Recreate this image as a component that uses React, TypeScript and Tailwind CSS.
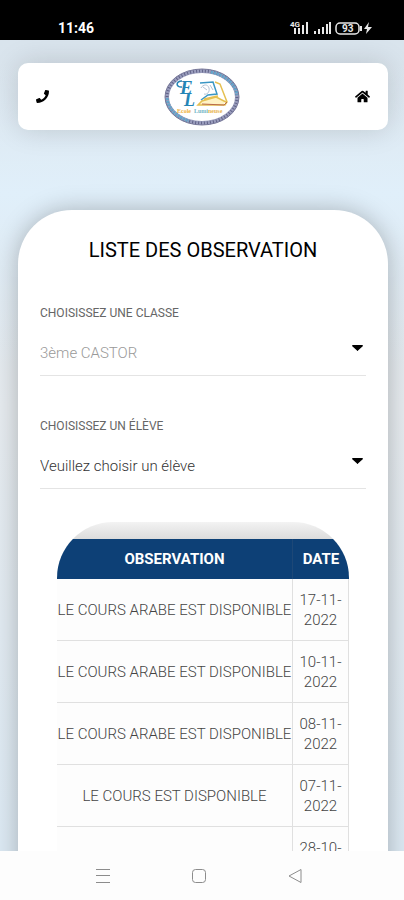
import { FaHome, FaPhone } from 'react-icons/fa'

interface Observation {
  label: string
  date: string
}

interface SelectFieldProps {
  id: string
  label: string
  options: string[]
  disabled?: boolean
}

const observations: Observation[] = [
  { label: 'LE COURS ARABE EST DISPONIBLE', date: '17-11-2022' },
  { label: 'LE COURS ARABE EST DISPONIBLE', date: '10-11-2022' },
  { label: 'LE COURS ARABE EST DISPONIBLE', date: '08-11-2022' },
  { label: 'LE COURS EST DISPONIBLE', date: '07-11-2022' },
  { label: '', date: '28-10-2022' },
]

function StatusBar() {
  return (
    <div className="flex h-10 shrink-0 items-center justify-between bg-black pl-[58px] pr-8 pt-4 text-white">
      <span className="text-sm font-bold leading-4">11:46</span>
      <svg width="84" height="16" viewBox="0 0 84 16" fill="#e8e8e8" aria-hidden="true">
        <text x="2" y="7" fontSize="8" fontWeight="700" fontFamily="Roboto, sans-serif">4G</text>
        <path d="M6 8h2v6H6zM10 8h2v6h-2zM14 5h2v9h-2zM18 2h2v12h-2z" />
        <path d="M26 11h2v3h-2zM30 9h2v5h-2zM34 7h2v7h-2zM38 4h2v10h-2zM41 2h2v12h-2z" />
        <rect x="48" y="3" width="23" height="11" rx="4" fill="none" stroke="#e8e8e8" strokeWidth="1.5" />
        <path d="M72 6h2v5h-2z" />
        <text x="54" y="12" fontSize="10" fontWeight="700" fontFamily="Roboto, sans-serif">93</text>
        <path d="M81 2l-5 7h3l-1 5 6-7h-4z" />
      </svg>
    </div>
  )
}

function Logo() {
  return (
    <svg width="76" height="58" viewBox="0 0 76 58" role="img" aria-label="Ecole Lumineuse">
      <ellipse cx="38" cy="29" rx="35" ry="26" fill="#fff" stroke="#9a9dbd" strokeWidth="4" />
      <ellipse cx="38" cy="29" rx="35" ry="26" fill="none" stroke="#626488" strokeWidth="3" strokeDasharray="1 2" />
      <path d="M47 4C62 7 72 17 73 27M3 30C4 41 14 50 25 53" fill="none" stroke="#62a7cc" strokeWidth="3" strokeDasharray="2 1" />
      <ellipse cx="38" cy="29" rx="37" ry="28" fill="none" stroke="#777899" />
      <g fill="#2585b6" fontFamily="Liberation Serif, serif" fontStyle="italic" fontWeight="700">
        <text x="16" y="26" fontSize="19">E</text>
        <text x="20" y="38" fontSize="18">L</text>
      </g>
      <path d="M18 19c-6 1-7-6 0-6" fill="none" stroke="#2585b6" strokeWidth="1.5" />
      <path d="M36 33l16-6 9 7-2 3H36z" fill="#fff3c4" />
      <path d="M36 15l13-1 4 12-9 1-7 5" fill="#fff" stroke="#3a96c4" strokeWidth="1.5" />
      <path d="M51 14l5 2 7 18-2 3H34l4-4 14-4 10 5M40 31l14-3" fill="none" stroke="#e5c052" strokeWidth="1.5" />
      <path d="M38 36l22 1 3-3" fill="none" stroke="#b96b4c" />
      <path d="M37 20c2-4 7-4 8 0s-2 7-5 6M39 19l4 3M46 17l3 5" fill="none" stroke="#b5c3d5" />
      <text x="13" y="45" fontSize="6" fontWeight="700" fontFamily="Liberation Serif, serif">
        <tspan fill="#efb13c">Ecole</tspan>
        <tspan fill="#75b7c7" dx="3">Lumi</tspan>
        <tspan fill="#e8b452">neuse</tspan>
      </text>
    </svg>
  )
}

function Header() {
  return (
    <header className="ml-[18px] mr-4 mt-[23px] flex h-[67px] items-center justify-between rounded-[10px] bg-white px-[18px] shadow-[0_0_28px_rgba(0,0,0,0.15)]">
      <a href="#contact" aria-label="Téléphone">
        <FaPhone className="size-[13px]" />
      </a>
      <Logo />
      <a href="#accueil" aria-label="Accueil">
        <FaHome className="size-[15px]" />
      </a>
    </header>
  )
}

function SelectField({ id, label, options, disabled }: SelectFieldProps) {
  return (
    <div className="mb-[42px] text-[#666]">
      <label htmlFor={id} className="block text-xs leading-4">{label}</label>
      <div className="relative mt-2">
        <select
          id={id}
          disabled={disabled}
          className="block h-[47px] w-full appearance-none border-b border-[#e4e4e4] bg-transparent p-0 pt-[3px] text-[15px] font-light text-[#333] opacity-100 outline-none disabled:text-[#999]"
        >
          {options.map((option) => (
            <option key={option}>{option}</option>
          ))}
        </select>
        <svg className="pointer-events-none absolute right-[3px] top-4" width="11" height="6" viewBox="0 0 11 6" aria-hidden="true">
          <path d="M0 1q0-1 1-1h9q1 0 1 1L6 5.5q-.5 1-1 0z" />
        </svg>
      </div>
    </div>
  )
}

function ObservationTable() {
  return (
    <div className="mx-[17px] overflow-hidden rounded-t-[56px] bg-linear-to-b from-[#f3f3f3] to-[#dcdcdc] to-[17px] pt-[17px]">
      <table className="w-full border-separate border-spacing-0 bg-[#fdfdfd] text-center text-[15px] leading-5 text-[#444]">
        <thead className="bg-[#0d4076] text-white">
          <tr className="h-10">
            <th className="border-r border-[#1d4877] p-0 font-bold">OBSERVATION</th>
            <th className="w-14 p-0 font-bold">DATE</th>
          </tr>
        </thead>
        <tbody className="font-light">
          {observations.map(({ label, date }) => (
            <tr key={date} className="h-[62px]">
              <td className="border-b border-r border-[#e0e0e0] p-0">{label}</td>
              <td className="border-b border-r border-[#e0e0e0] px-1 py-0">{date}</td>
            </tr>
          ))}
        </tbody>
      </table>
    </div>
  )
}

function NavigationBar() {
  return (
    <nav className="flex h-[49px] shrink-0 items-center justify-center gap-20 bg-[#fdfdfd] pr-[6px] text-[#8c8c8c]">
      <button type="button" aria-label="Menu">
        <svg width="16" height="16" viewBox="0 0 16 16" fill="none" stroke="currentColor">
          <path d="M1 1.5h14M1 7.5h14M1 14.5h14" />
        </svg>
      </button>
      <button type="button" aria-label="Accueil du téléphone">
        <svg width="16" height="16" viewBox="0 0 16 16" fill="none" stroke="currentColor">
          <rect x="1.5" y="1.5" width="13" height="13" rx="3" />
        </svg>
      </button>
      <button type="button" aria-label="Retour">
        <svg width="16" height="16" viewBox="0 0 16 16" fill="none" stroke="currentColor">
          <path d="M14 1.5L2 8l12 6.5z" />
        </svg>
      </button>
    </nav>
  )
}

export default function App() {
  return (
    <div className="flex h-screen flex-col overflow-hidden font-[Roboto,sans-serif]">
      <StatusBar />
      <div className="min-h-0 flex-1 overflow-hidden bg-linear-to-b from-[#d9e4ed] via-[#e6ebef] via-45% to-[#dce9f3]">
        <div className="min-h-full bg-linear-to-b from-transparent via-[#e0effa] via-15% to-transparent to-35%">
          <Header />
          <main className="ml-[18px] mr-4 mt-20 rounded-t-[54px] bg-white px-[22px] pb-10 pt-[26px] shadow-[0_0_24px_rgba(0,0,0,0.25)]">
            <h1 className="mb-[41px] text-center text-xl leading-7 text-black">LISTE DES OBSERVATION</h1>
            <SelectField id="classe" label="CHOISISSEZ UNE CLASSE" options={['3ème CASTOR']} disabled />
            <SelectField id="eleve" label="CHOISISSEZ UN ÉLÈVE" options={['Veuillez choisir un élève']} />
            <div className="-mt-[9px]">
              <ObservationTable />
            </div>
          </main>
        </div>
      </div>
      <NavigationBar />
    </div>
  )
}
